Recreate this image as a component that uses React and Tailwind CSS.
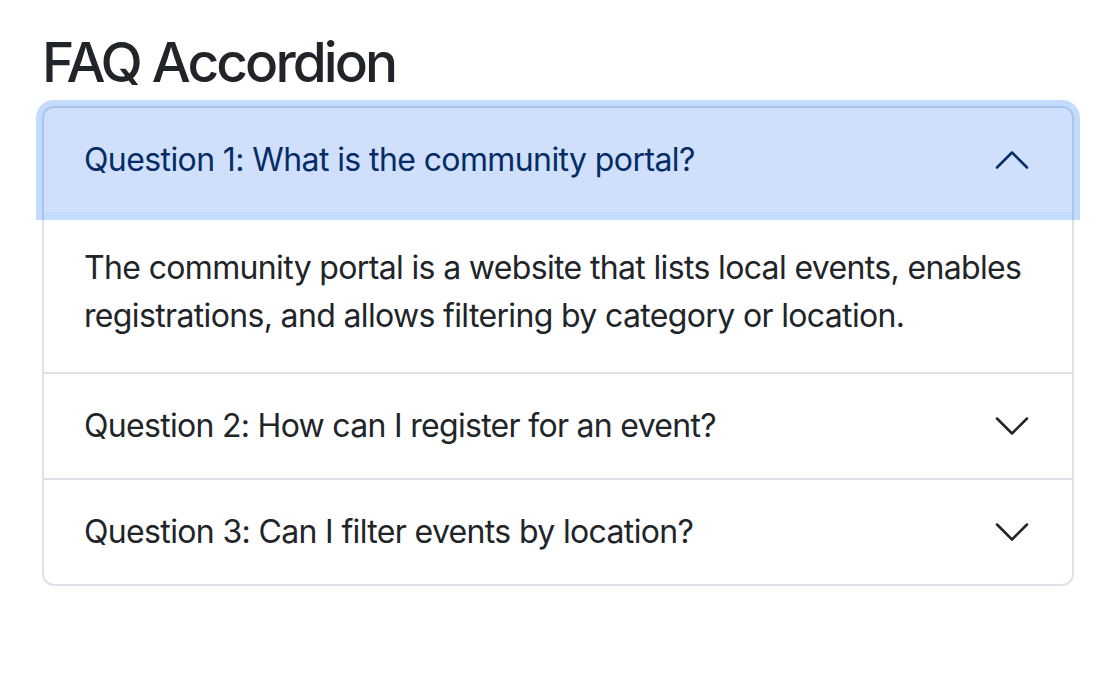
import React from "react";

const Chevron = ({ up, color }) => (
  <svg
    viewBox="0 0 16 16"
    width="40"
    height="40"
    fill="none"
    stroke={color}
    strokeWidth="1"
    strokeLinecap="round"
    strokeLinejoin="round"
    className={up ? "rotate-180 shrink-0" : "shrink-0"}
  >
    <path d="M2 5L8 11L14 5" />
  </svg>
);

export default function App() {
  const font = { fontFamily: "Inter, 'Noto Sans', sans-serif" };
  return (
    <div className="min-h-screen bg-white text-[#212529]" style={font}>
      <div className="pl-[42px] pr-[44px] pt-[30px]">
        <h2 className="text-[55px] leading-[65px] font-medium mb-[11px] tracking-[-2.9px]">FAQ Accordion</h2>
        <div className="w-[1032px] border-2 border-[#dee2e6] rounded-[12px]">
          <div>
            <button className="relative z-10 w-full h-[104px] flex items-center justify-between px-[40px] bg-[#d0e0fc] text-[#052c65] rounded-t-[10px] shadow-[0_0_0_8px_rgba(13,110,253,0.25)] text-[32px] tracking-[-0.6px] text-left">
              <span>Question 1: What is the community portal?</span>
              <Chevron up color="#052c65" />
            </button>
            <div className="px-[40px] py-[32px] text-[32px] leading-[48px] tracking-[-0.65px]">
              The community portal is a website that lists local events, enables registrations, and allows filtering by category or location.
            </div>
          </div>
          <div className="border-t-2 border-[#dee2e6]">
            <button className="w-full h-[104px] flex items-center justify-between px-[40px] text-[32px] tracking-[-0.7px] text-left text-[#212529]">
              <span>Question 2: How can I register for an event?</span>
              <Chevron color="#212529" />
            </button>
          </div>
          <div className="border-t-2 border-[#dee2e6]">
            <button className="w-full h-[104px] flex items-center justify-between px-[40px] text-[32px] tracking-[-0.65px] text-left text-[#212529]">
              <span>Question 3: Can I filter events by location?</span>
              <Chevron color="#212529" />
            </button>
          </div>
        </div>
      </div>
    </div>
  );
}
